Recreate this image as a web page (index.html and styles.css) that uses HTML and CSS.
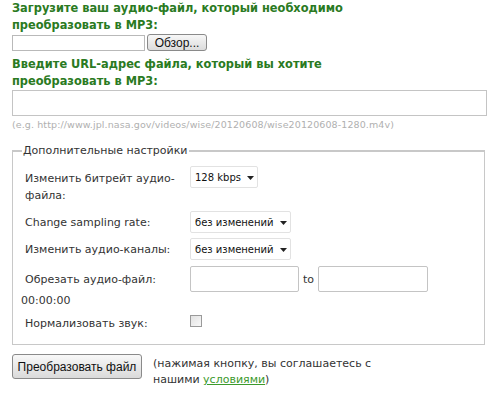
FILE: index.html
```html
<!DOCTYPE html>
<html lang="ru">
<head>
<meta charset="utf-8">
<link rel="stylesheet" href="styles.css">
</head>
<body>
<div class="page">
  <h2 class="title">Загрузите ваш аудио-файл, который необходимо<br>преобразовать в MP3:</h2>
  <div class="file-row">
    <input class="file-name" type="text">
    <button class="browse" type="button">Обзор...</button>
  </div>
  <h2 class="title title-url">Введите URL-адрес файла, который вы хотите<br>преобразовать в MP3:</h2>
  <input class="url" type="text">
  <div class="example">(e.g. http://www.jpl.nasa.gov/videos/wise/20120608/wise20120608-1280.m4v)</div>

  <fieldset class="options">
    <legend>Дополнительные настройки</legend>
    <div class="grid">
      <div class="label two">Изменить битрейт аудио-<br>файла:</div>
      <div class="ctl ctl-top"><span class="sel-wrap"><select class="sel sel-small"><option>128 kbps</option></select><svg class="arrow" width="7" height="4" viewBox="0 0 7 4"><path d="M0 0H7L3.5 4Z" fill="#222"/></svg></span></div>

      <div class="label">Change sampling rate:</div>
      <div class="ctl"><span class="sel-wrap"><select class="sel"><option>без изменений</option></select><svg class="arrow" width="7" height="4" viewBox="0 0 7 4"><path d="M0 0H7L3.5 4Z" fill="#222"/></svg></span></div>

      <div class="label">Изменить аудио-каналы:</div>
      <div class="ctl"><span class="sel-wrap"><select class="sel"><option>без изменений</option></select><svg class="arrow" width="7" height="4" viewBox="0 0 7 4"><path d="M0 0H7L3.5 4Z" fill="#222"/></svg></span></div>

      <div class="label trim-label">Обрезать аудио-файл:</div>
      <div class="ctl trim"><input class="time" type="text"><span class="to">to</span><input class="time time2" type="text"></div>
    </div>
    <div class="zero">00:00:00</div>
    <div class="grid grid-norm">
      <div class="label">Нормализовать звук:</div>
      <div class="ctl ctl-check"><span class="check"></span></div>
    </div>
  </fieldset>

  <div class="submit-row">
    <button class="convert" type="button">Преобразовать файл</button>
    <p class="note">(нажимая кнопку, вы соглашаетесь с<br>нашими <a href="#">условиями</a>)</p>
  </div>
</div>
</body>
</html>
```
FILE: styles.css
```css
html, body {
  margin: 0;
  padding: 0;
  background: #ffffff;
}
body {
  font-family: "DejaVu Sans", Verdana, sans-serif;
  font-size: 11px;
  color: #333;
}
.page {
  padding: 0 12px;
  width: 475px;
}
.title {
  margin: 0;
  font-size: 11.4px;
  font-weight: bold;
  color: #2a7a22;
  line-height: 17px;
}
.file-row {
  display: flex;
  align-items: center;
  gap: 2px;
  height: 17px;
}
.file-name {
  box-sizing: border-box;
  width: 133px;
  height: 16px;
  border: 1px solid #b9b9b9;
  margin: 0;
  padding: 0;
  background: #fff;
}
.browse {
  box-sizing: border-box;
  height: 17px;
  width: 60px;
  padding: 0;
  font-family: "Liberation Sans", Arial, sans-serif;
  font-size: 12px;
  color: #111;
  border: 1px solid #8a8a8a;
  border-radius: 3px;
  background: linear-gradient(#f7f7f7, #dcdcdc);
}
.title-url {
  margin-top: 5px;
}
.url {
  display: block;
  box-sizing: border-box;
  width: 475px;
  height: 26px;
  margin: 0;
  border: 1px solid #c4c4c4;
  background: #fff;
  padding: 0;
}
.example {
  font-size: 9.5px;
  line-height: 12px;
  color: #b0b0b0;
  margin-top: 3px;
  letter-spacing: 0.1px;
}
.options {
  margin: 13px 0 0 0;
  padding: 9px 12px 12px 8px;
  border: 1px solid #c8c8c8;
  border-top-width: 2px;
  width: 473px;
  box-sizing: border-box;
  min-width: 0;
}
.options legend {
  padding: 0 1px;
  margin-left: 1px;
  font-size: 11px;
  color: #333;
}
.grid {
  display: grid;
  grid-template-columns: 165px auto;
  row-gap: 5px;
  align-items: center;
  margin-left: 4px;
}
.label {
  line-height: 17px;
  color: #333;
}
.label.two {
  padding-top: 4px;
  padding-bottom: 2px;
}
.ctl-top {
  align-self: start;
}
.grid .ctl {
  display: flex;
  align-items: center;
}
.sel-wrap {
  position: relative;
  display: inline-block;
  height: 22px;
}
.sel {
  -webkit-appearance: none;
  appearance: none;
  box-sizing: border-box;
  height: 22px;
  width: 101px;
  border: 1px solid #e2e2e2;
  border-radius: 2px;
  background: #fff;
  font-family: "DejaVu Sans", Verdana, sans-serif;
  font-size: 10px;
  color: #111;
  padding: 0 0 0 4px;
  margin: 0;
  display: block;
}
.sel-small {
  width: 68px;
}
.arrow {
  position: absolute;
  right: 4px;
  top: 10px;
}
.trim {
  margin-top: 1px;
}
.trim-label {
  margin-top: 1px;
}
.time {
  box-sizing: border-box;
  width: 109px;
  height: 26px;
  margin: 0;
  padding: 0;
  border: 1px solid #c4c4c4;
  border-radius: 2px;
  background: #fff;
}
.time2 {
  width: 110px;
}
.to {
  width: 19px;
  text-align: center;
  color: #333;
}
.zero {
  margin-top: 0;
  line-height: 17px;
  color: #333;
}
.grid-norm {
  margin-top: 6px;
}
.ctl-check {
  align-self: start;
}
.check {
  display: inline-block;
  width: 10px;
  height: 10px;
  border: 1px solid #9a9a9a;
  background: linear-gradient(135deg, #e2e2e2, #f8f8f8);
}
.submit-row {
  display: flex;
  align-items: flex-start;
  gap: 11px;
  margin-top: 9px;
}
.convert {
  box-sizing: border-box;
  width: 130px;
  height: 25px;
  padding: 0;
  font-family: "Liberation Sans", Arial, sans-serif;
  font-size: 12px;
  color: #111;
  border: 1px solid #8a8a8a;
  border-radius: 3px;
  background: linear-gradient(#f8f8f8, #dadada);
}
.note {
  margin: 0;
  padding-top: 2px;
  line-height: 16px;
  color: #333;
}
.note a {
  color: #3c9a2c;
  text-decoration: underline;
}
```
